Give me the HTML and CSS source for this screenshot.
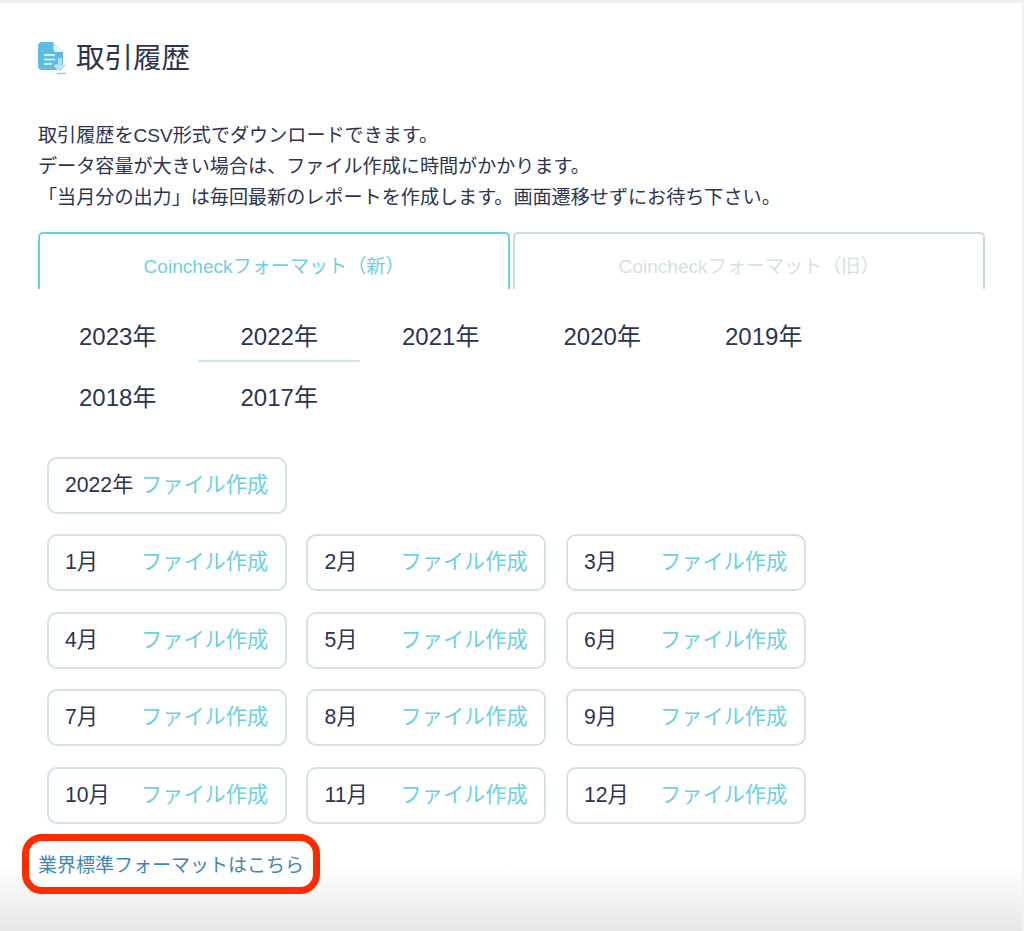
FILE: index.html
```html
<!DOCTYPE html>
<html lang="ja">
<head>
    <meta charset="UTF-8">
    <meta name="viewport" content="width=device-width, initial-scale=1.0">
    <title>取引履歴</title>
    <link rel="stylesheet" href="styles.css">
</head>
<body>
    <div class="page">
        <h2 class="title">
            <svg class="title-icon" width="29" height="33" viewBox="0 0 29 33">
                <path d="M4 0H15L25 10V24Q25 28 21 28H4Q0 28 0 24V4Q0 0 4 0Z" fill="#5bbce6"/>
                <path d="M15.500 0.500V7Q15.500 10 18.500 10H25Z" fill="#e6f5fb"/>
                <path d="M6 13H17M6 17.500H17M6 22H14" stroke="#fff" stroke-width="1.700" fill="none"/>
                <path d="M22 16V26M17 23L22 28L27 23" stroke="#fff" stroke-width="3" fill="none"/>
                <path d="M22 16V26M17 23L22 28L27 23" stroke="#8ed3ef" stroke-width="1.400" fill="none"/>
                <path d="M19 31.500H28" stroke="#8ed3ef" stroke-width="1.500" fill="none"/>
            </svg>
            <span>取引履歴</span>
        </h2>

        <p class="intro">
            取引履歴をCSV形式でダウンロードできます。<br>
            データ容量が大きい場合は、ファイル作成に時間がかかります。<br>
            「当月分の出力」は毎回最新のレポートを作成します。画面遷移せずにお待ち下さい。
        </p>

        <div class="tabs">
            <div class="tab active">Coincheckフォーマット（新）</div>
            <div class="tab">Coincheckフォーマット（旧）</div>
        </div>

        <ul class="years">
            <li>2023年</li>
            <li class="current">2022年</li>
            <li>2021年</li>
            <li>2020年</li>
            <li>2019年</li>
            <li>2018年</li>
            <li>2017年</li>
        </ul>

        <div class="files">
            <div class="file"><span>2022年</span><a>ファイル作成</a></div>
        </div>
        <div class="files months">
            <div class="file"><span>1月</span><a>ファイル作成</a></div>
            <div class="file"><span>2月</span><a>ファイル作成</a></div>
            <div class="file"><span>3月</span><a>ファイル作成</a></div>
            <div class="file"><span>4月</span><a>ファイル作成</a></div>
            <div class="file"><span>5月</span><a>ファイル作成</a></div>
            <div class="file"><span>6月</span><a>ファイル作成</a></div>
            <div class="file"><span>7月</span><a>ファイル作成</a></div>
            <div class="file"><span>8月</span><a>ファイル作成</a></div>
            <div class="file"><span>9月</span><a>ファイル作成</a></div>
            <div class="file"><span>10月</span><a>ファイル作成</a></div>
            <div class="file"><span>11月</span><a>ファイル作成</a></div>
            <div class="file"><span>12月</span><a>ファイル作成</a></div>
        </div>

        <a class="standard-link">業界標準フォーマットはこちら</a>
    </div>
</body>
</html>
```

FILE: styles.css
```css
html, body {
    margin: 0;
    padding: 0;
    height: 931px;
    overflow: hidden;
}

body {
    font-family: "Liberation Sans", "Noto Sans CJK JP", sans-serif;
    color: #2c3450;
    background: linear-gradient(to bottom, #ffffff 865px, #e6e6e6 931px);
}

.page {
    height: 931px;
    box-sizing: border-box;
    border-top: 3px solid #eef0f4;
    border-right: 2px solid #f0f1f5;
    padding: 0 0 0 38px;
}

/* Heading */
.title {
    margin: 0;
    padding-top: 39px;
    height: 33px;
    display: flex;
    align-items: flex-start;
    gap: 9px;
    font-size: 28.5px;
    font-weight: 400;
    line-height: 33px;
}
.title-icon {
    flex: none;
}

.intro {
    margin: 45px 0 0;
    font-size: 19.1px;
    line-height: 31px;
}

/* Tabs */
.tabs {
    display: flex;
    gap: 3px;
    margin-top: 19px;
}
.tab {
    width: 472px;
    height: 57px;
    box-sizing: border-box;
    border: 2px solid #c9dde0;
    border-bottom: none;
    border-radius: 5px 5px 0 0;
    font-size: 19.1px;
    line-height: 66px;
    text-align: center;
    color: #d3e2e5;
}
.tab.active {
    border-color: #6dd0e2;
    color: #6dd0e2;
}

/* Year list */
.years {
    display: flex;
    flex-wrap: wrap;
    list-style: none;
    margin: 17px 0 0 -1.5px;
    padding: 0;
    width: 808px;
}
.years li {
    width: 161.5px;
    height: 61px;
    box-sizing: border-box;
    padding-left: 42.5px;
    font-size: 24px;
    line-height: 61px;
}
.years li.current {
    height: 56px;
    margin-bottom: 5px;
    border-bottom: 2px solid #c6e8ef;
}

/* File buttons */
.files {
    display: grid;
    grid-template-columns: repeat(3, 240px);
    column-gap: 19.5px;
    row-gap: 20.5px;
    margin-left: 8.5px;
    margin-top: 29px;
}
.files.months {
    margin-top: 20px;
}
.file {
    height: 57px;
    box-sizing: border-box;
    border: 2px solid #d3e2e5;
    border-radius: 10px;
    display: flex;
    align-items: center;
    padding: 0 16.500px 6px;
    font-size: 21.2px;
}
.file span {
    width: 76px;
    flex: none;
    white-space: nowrap;
}
.file a {
    color: #6dd0e2;
    white-space: nowrap;
}

/* Annotated link */
.standard-link {
    display: block;
    width: fit-content;
    margin: 10px 0 0 -16px;
    padding: 0 9px;
    height: 46px;
    line-height: 49px;
    border: 7px solid #ff2a00;
    border-radius: 20px;
    background: #fff;
    font-size: 19px;
    color: #3d86bb;
}
```
